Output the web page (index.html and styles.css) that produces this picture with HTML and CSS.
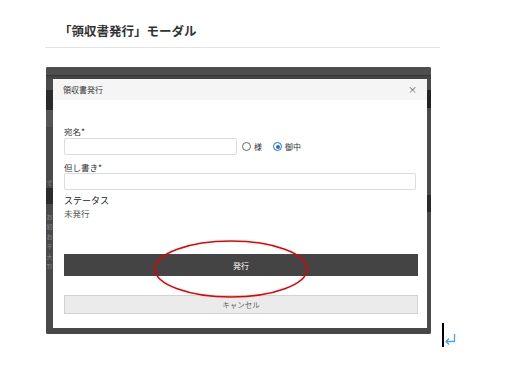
FILE: index.html
```html
<!DOCTYPE html>
<html lang="ja">
<head>
    <meta charset="UTF-8">
    <meta name="viewport" content="width=device-width, initial-scale=1.0">
    <title>領収書発行モーダル</title>
    <link rel="stylesheet" href="styles.css">
</head>
<body>
    <div class="page">
        <h1 class="title">「領収書発行」モーダル</h1>
        <hr class="rule">

        <div class="figure-row">
            <div class="frame">
                <div class="frame-top"></div>
                <div class="frame-mid">
                    <!-- what shows of the page behind the modal -->
                    <div class="gutter gutter-left">
                        <div class="band band-dark1"></div>
                        <div class="band band-light"></div>
                        <div class="peek peek-de">で</div>
                        <div class="band band-dark2"></div>
                        <div class="peek-list">
                            <span>お</span>
                            <span>初</span>
                            <span>お</span>
                            <span>〒</span>
                            <span>大</span>
                            <span>TI</span>
                        </div>
                    </div>

                    <div class="modal">
                        <div class="modal-header">
                            <span class="modal-title">領収書発行</span>
                            <span class="modal-close">×</span>
                        </div>
                        <div class="modal-body">
                            <div class="label label-first">宛名*</div>
                            <div class="field-row">
                                <div class="input input-name"></div>
                                <div class="radio-group">
                                    <span class="radio"></span>
                                    <span class="radio-text">様</span>
                                    <span class="radio checked"></span>
                                    <span class="radio-text">御中</span>
                                </div>
                            </div>

                            <div class="label label-second">但し書き*</div>
                            <div class="input input-full"></div>

                            <div class="status-label">ステータス</div>
                            <div class="status-value">未発行</div>

                            <div class="btn btn-issue">発行</div>
                            <div class="btn btn-cancel">キャンセル</div>
                        </div>

                        <svg class="mark" width="374" height="249" viewBox="0 0 374 249">
                            <ellipse cx="178" cy="190" rx="76" ry="28" fill="none" stroke="#e60000" stroke-width="1.5"/>
                        </svg>
                    </div>

                    <div class="gutter gutter-right">
                        <div class="band band-r1"></div>
                        <div class="band band-r2"></div>
                    </div>
                </div>
                <div class="frame-bottom"></div>
            </div>

            <div class="caret">
                <span class="caret-bar"></span>
                <svg class="return" width="12" height="13" viewBox="0 0 12 13">
                    <path d="M10.5 1 V8.5 H2" fill="none" stroke="#4aa3f5" stroke-width="1.3"/>
                    <path d="M5 5.5 L2 8.5 L5 11.5" fill="none" stroke="#4aa3f5" stroke-width="1.3"/>
                </svg>
            </div>
        </div>
    </div>
</body>
</html>
```

FILE: styles.css
```css
body {
    margin: 0;
    background: #fff;
    font-family: "Noto Sans CJK JP", "Noto Sans", sans-serif;
    color: #333;
}

.page {
    padding: 23px 0 0 45px;
}

.title {
    margin: 0 0 8px 14px;
    font-size: 12.5px;
    line-height: 16px;
    font-weight: bold;
    color: #333;
}

.rule {
    width: 395px;
    margin: 0;
    border: none;
    border-top: 1px solid #e3e3e3;
}

.figure-row {
    display: flex;
    align-items: flex-start;
    margin-top: 19px;
    margin-left: 1px;
}

/* dark screenshot frame */
.frame {
    width: 385px;
    background: #4a4a4a;
    border-radius: 2px;
}

.frame-top {
    height: 12px;
    background: linear-gradient(#4e4e4e 0, #4e4e4e 8px, #353535 8px, #353535 9px, #444 9px);
    border-radius: 2px 2px 0 0;
}

.frame-mid {
    display: flex;
}

.gutter {
    background: #4a4a4a;
}

.gutter-left {
    width: 7px;
}

.gutter-right {
    width: 4px;
}

.band {
    width: 100%;
}

.band-dark1 {
    height: 20px;
    margin-top: 11px;
    background: #2a2a2a;
}

.band-light {
    height: 17px;
    background: #555;
}

.peek {
    font-size: 6px;
    line-height: 10px;
    color: #8a8a8a;
}

.peek-de {
    margin-top: 51px;
    margin-left: 0.5px;
}

.band-dark2 {
    height: 16px;
    background: #2b2b2b;
}

.peek-list {
    display: flex;
    flex-direction: column;
    margin-top: 8px;
    margin-left: 0.5px;
    font-size: 6px;
    line-height: 10px;
    color: #8c8c8c;
}

.band-r1 {
    height: 18px;
    margin-top: 11px;
    background: #222;
}

.band-r2 {
    height: 17px;
    margin-top: 87px;
    background: #2a2a2a;
}

.frame-bottom {
    height: 6px;
    background: #474747;
    border-radius: 0 0 2px 2px;
}

/* modal */
.modal {
    position: relative;
    width: 374px;
    height: 249px;
    background: #fff;
}

.modal-header {
    display: flex;
    align-items: center;
    justify-content: space-between;
    height: 21px;
    padding: 0 10px 0 10px;
    background: #f5f5f5;
}

.modal-title {
    font-size: 8px;
    color: #333;
}

.modal-close {
    font-size: 9px;
    color: #555;
}

.modal-body {
    padding: 0 11px 14px;
}

.label {
    font-size: 8.5px;
    line-height: 12px;
    color: #333;
}

.label-first {
    margin-top: 25px;
}

.label-second {
    margin-top: 6px;
}

.field-row {
    display: flex;
    align-items: center;
    margin-top: 1px;
}

.input {
    height: 15px;
    border: 1px solid #dcdcdc;
    border-radius: 2px;
    background: #fff;
}

.input-name {
    width: 171px;
}

.input-full {
    width: 350px;
}

.radio-group {
    display: flex;
    align-items: center;
    margin-left: 5px;
    font-size: 8px;
    color: #333;
}

.radio {
    width: 7px;
    height: 7px;
    border: 1px solid #666;
    border-radius: 50%;
    position: relative;
}

.radio.checked {
    border-color: #1f6fd8;
    margin-left: 11px;
}

.radio.checked::after {
    content: "";
    position: absolute;
    left: 1.5px;
    top: 1.5px;
    width: 4px;
    height: 4px;
    border-radius: 50%;
    background: #1f6fd8;
}

.radio-text {
    margin-left: 3px;
}

.status-label {
    margin-top: 5px;
    font-size: 9px;
    line-height: 12px;
    color: #222;
}

.status-value {
    font-size: 8.5px;
    line-height: 12px;
    color: #555;
}

.btn {
    display: flex;
    align-items: center;
    justify-content: center;
    width: 354px;
    box-sizing: border-box;
    font-size: 8px;
}

.btn-issue {
    height: 22px;
    margin-top: 35px;
    background: #444;
    color: #fff;
}

.btn-cancel {
    height: 19px;
    margin-top: 19px;
    background: #ebebeb;
    border: 1px solid #d2d2d2;
    color: #666;
    font-size: 7.5px;
}

.mark {
    position: absolute;
    left: 0;
    top: 0;
    pointer-events: none;
}

/* text caret and return mark after the figure */
.caret {
    display: flex;
    align-items: flex-end;
    margin-left: 11px;
    margin-top: 256px;
}

.caret-bar {
    width: 2px;
    height: 24px;
    background: #000;
}

.return {
    margin-bottom: 1px;
}
```
